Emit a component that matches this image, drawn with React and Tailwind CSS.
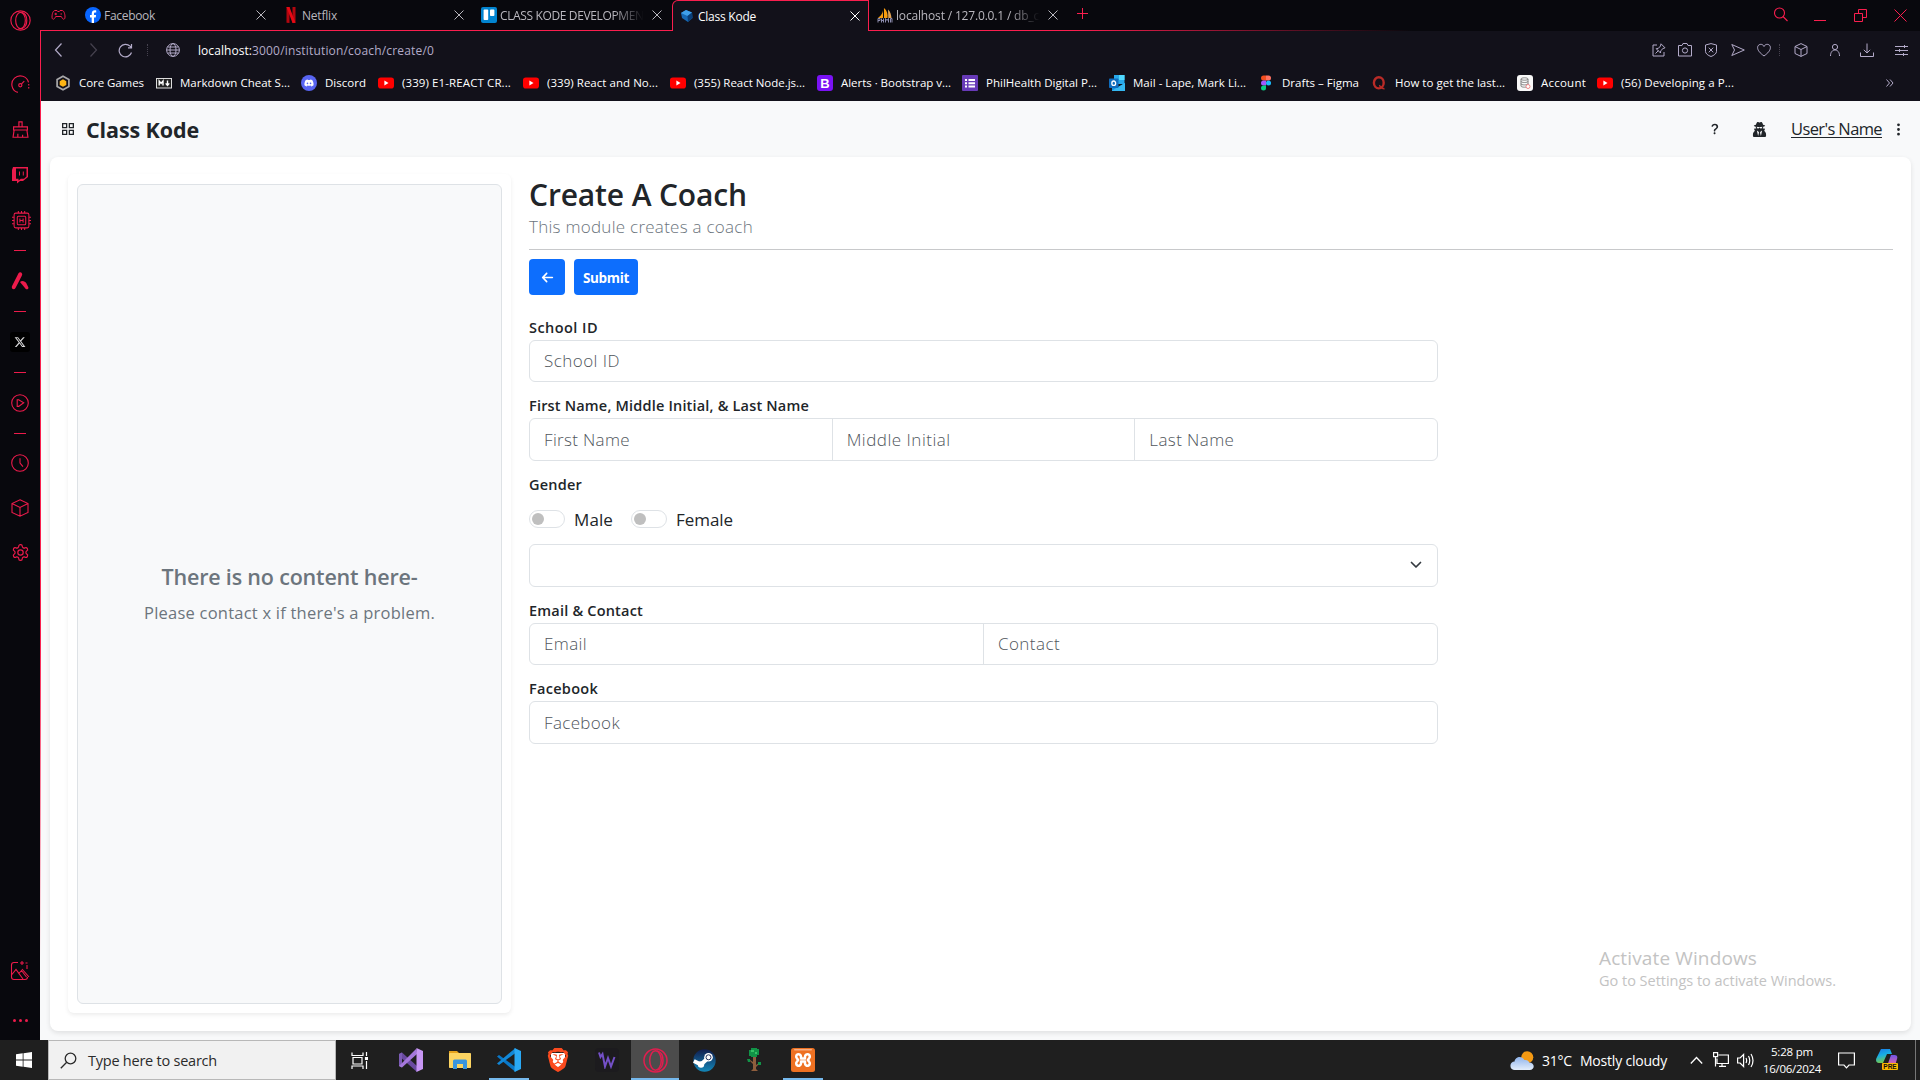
import React, { useLayoutEffect, useRef } from "react";
import { FaUserSecret } from "react-icons/fa";
import { FaArrowLeft, FaDiscord, FaXTwitter } from "react-icons/fa6";
import { BsQuestionLg, BsThreeDotsVertical } from "react-icons/bs";
import { SiBrave } from "react-icons/si";

const OS = "font-['Open_Sans',sans-serif]";

/* One line of text whose tracking is adjusted so that it spans w pixels. */
function T({ w, className = "", children }) {
  const ref = useRef(null);
  useLayoutEffect(() => {
    const el = ref.current;
    el.style.letterSpacing = "0px";
    const n = el.textContent.length;
    const natural = el.getBoundingClientRect().width;
    el.style.letterSpacing = (w - natural) / n + "px";
  }, [w, children]);
  return (
    <span ref={ref} className={`inline-block shrink-0 whitespace-pre leading-none ${className}`}>
      {children}
    </span>
  );
}

function Line({ size = 16, box = 16, sw = 1, className = "", children }) {
  return (
    <svg width={size} height={size} viewBox={`0 0 ${box} ${box}`} fill="none" stroke="currentColor" strokeWidth={sw} className={`block shrink-0 ${className}`}>
      {children}
    </svg>
  );
}

const OperaO = ({ size, sw = 1 }) => (
  <Line size={size} box={20} sw={sw}>
    <circle cx="10" cy="10" r="9.2" />
    <ellipse cx="10" cy="10" rx="4.6" ry="7.8" />
    <path d="M11 2.3c3.5.8 5 4 5 7.7s-1.500 6.900-5 7.700" />
  </Line>
);

/* ---------- favicons ---------- */
const YouTube = () => (
  <svg width="16" height="16" viewBox="0 0 16 16" className="shrink-0">
    <rect y="2.500" width="16" height="11" rx="2.800" fill="#f00" />
    <path d="M6.400 5.600 10.500 8l-4.100 2.400z" fill="#fff" />
  </svg>
);
const Facebook = () => (
  <svg width="16" height="16" viewBox="0 0 16 16" className="shrink-0">
    <circle cx="8" cy="8" r="8" fill="#0866ff" />
    <path d="M6.700 16V10.400H5V8h1.700V6.900c0-2.700 1.300-3.700 3.200-3.700.6 0 1 .1 1.300.2v2.200h-.9c-1 0-1.300.5-1.300 1.400v1h2.100l-.4 2.400H9V16z" fill="#fff" />
  </svg>
);
const Netflix = () => (
  <svg width="16" height="16" viewBox="0 0 16 16" className="shrink-0">
    <path d="M3.500 0h3v16l-3-.3zM9.500 0h3v15.700l-3 .3z" fill="#b1060f" />
    <path d="M3.500 0h3l6 15.800-3 .2z" fill="#e50914" />
  </svg>
);
const Trello = () => (
  <svg width="16" height="16" viewBox="0 0 16 16" className="shrink-0">
    <rect width="16" height="16" rx="2" fill="#0284d0" />
    <rect x="2.600" y="2.600" width="4.600" height="10.400" rx=".8" fill="#fff" />
    <rect x="9" y="2.600" width="4.400" height="6.400" rx=".8" fill="#fff" />
  </svg>
);
const KodeCube = () => (
  <svg width="16" height="16" viewBox="0 0 16 16" className="shrink-0">
    <path d="M7 2 13 4.500 13.500 10 9 14 3 10 2 5z" fill="#1769b5" />
    <path d="M7 2 13 4.500 8.500 8 2 5z" fill="#3fa0ea" />
    <path d="M8.500 8 13 4.500 13.500 10 9 14z" fill="#0a3f78" />
  </svg>
);
const PhpMyAdmin = () => (
  <svg width="16" height="16" viewBox="0 0 16 16" className="shrink-0">
    <path d="M6 .5C6.500 5 5 8 1 11h5z" fill="#f89c0e" />
    <path d="M7 1c3 2.500 4 6 3.500 10H7z" fill="#f89c0e" />
    <path d="M11 2.500c2.500 2 3 5 3.500 8.500h-3.200z" fill="#e2a354" />
    <path d="M1 15.500v-4h2v2H1m3.500 2v-4m0 2h2m0-2v4m2 0v-4l1.500 2 1.500-2v4m2 0v-4h1.500v4" stroke="#8c8cae" fill="none" />
  </svg>
);
const CoreGames = () => (
  <svg width="16" height="16" viewBox="0 0 16 16" className="shrink-0">
    <path d="M8 1.200 13.900 4.600v6.800L8 14.800 2.100 11.400V4.600z" fill="#15131c" stroke="#a9a9ab" strokeWidth="1.700" />
    <path d="M8 4.300 11.300 6.200v3.700L8 11.800 4.700 9.900V6.200z" fill="#fdb515" />
  </svg>
);
const Markdown = () => (
  <Line>
    <rect x=".5" y="3.500" width="15" height="9.500" fill="#222" stroke="#ddd" />
    <path d="M3.200 10.500V6l1.900 2.400L7 6v4.500M11.500 5.600v4M9.700 8.400l1.800 2 1.800-2" stroke="#fff" strokeWidth="1.400" />
  </Line>
);
const Discord = () => (
  <div className="flex h-4 w-4 shrink-0 items-center justify-center rounded-full bg-[#5865f2] text-white"><FaDiscord size={10} /></div>
);
const BootstrapB = () => (
  <div className="flex h-4 w-4 shrink-0 items-center justify-center rounded-[3px] bg-[#7a12f5] font-['Liberation_Sans',sans-serif] text-[13px] font-bold leading-none text-white">B</div>
);
const Forms = () => (
  <svg width="16" height="16" viewBox="0 0 16 16" className="shrink-0">
    <rect width="16" height="16" rx="1" fill="#673ab7" />
    <path d="M3 4h2v2H3zm3.500 0H13v2H6.500zM3 7.200h2v2H3zm3.500 0H13v2H6.500zM3 10.400h2v2H3zm3.500 0H13v2H6.500z" fill="#fff" />
  </svg>
);
const Outlook = () => (
  <svg width="16" height="16" viewBox="0 0 16 16" className="shrink-0">
    <rect x="5" y="0" width="10.500" height="9" fill="#28a8ea" />
    <rect x="10" y="0" width="5.500" height="5" fill="#50d9ff" />
    <path d="M3 8 9 12 16 8v8H3z" fill="#1490df" />
    <path d="M3 15.500 16 8v8H3z" fill="#35b8f1" />
    <rect x="0" y="3.500" width="9.500" height="9.500" rx=".8" fill="#0f6cbd" />
    <ellipse cx="4.750" cy="8.200" rx="1.900" ry="2.200" fill="none" stroke="#fff" strokeWidth="1.300" />
  </svg>
);
const Figma = () => (
  <svg width="16" height="16" viewBox="0 0 16 16" className="shrink-0">
    <path d="M8 .5H5.500a2.500 2.500 0 0 0 0 5H8z" fill="#f24e1e" />
    <path d="M8 .5h2.500a2.500 2.500 0 0 1 0 5H8z" fill="#ff7262" />
    <path d="M8 5.500H5.500a2.500 2.500 0 0 0 0 5H8z" fill="#a259ff" />
    <circle cx="10.500" cy="8" r="2.500" fill="#1abcfe" />
    <path d="M8 10.500H5.500A2.500 2.500 0 1 0 8 13z" fill="#0acf83" />
  </svg>
);
const Quora = () => (
  <Line>
    <ellipse cx="7.800" cy="7.800" rx="4.900" ry="5.600" stroke="#b92b27" strokeWidth="2.400" />
    <path d="M8 10.500c1.500 0 2.500 3.700 5.500 3.200" stroke="#b92b27" strokeWidth="1.700" />
  </Line>
);
const Account = () => (
  <svg width="16" height="16" viewBox="0 0 16 16" className="shrink-0">
    <rect width="16" height="16" rx="3" fill="#f8f8f8" />
    <path d="M4 4c0-1.600 7-1.600 7 0v7c0 1.600-7 1.600-7 0zm0 0c0 1.600 7 1.600 7 0M4 6.300c0 1.600 7 1.600 7 0M4 8.700c0 1.600 7 1.600 7 0" fill="none" stroke="#777" strokeWidth=".9" />
    <circle cx="11" cy="11.500" r="2" fill="#fff" stroke="#e88" />
  </svg>
);

/* ---------- left rail ---------- */
const Dash = () => <div className="h-px w-3 bg-[#ec1b4b]" />;
const railItems = [
  ["h-[40px]", <OperaO size={21} sw={1.100} />],
  ["h-[23px]", null],
  ["h-[43px]", <Line size={19} box={18} sw={1.100}><path d="M6.500 16.500A8 8 0 1 1 16.600 7M9 17.200h0" /><path d="M16.800 8.500v5" strokeDasharray="1.500 1.300" /><circle cx="8.800" cy="9.700" r="1.500" /><path d="m10 8.500 2.600-2.700" /></Line>],
  ["h-[46px]", <Line size={17} box={16} sw={1.100}><path d="M6.500 5V.8h3V5M1.500 5.500h13v3h-13zM2 8.500l-1 6.800h14l-1-6.800M5.500 15v-3M10 15v-2" /></Line>],
  ["h-[46px]", <svg width="18" height="18" viewBox="0 0 18 18"><path d="M2 1h15v10l-5 4H9l-3 2.500V15H1V4z" fill="#ec1b4b" /><path d="M5 2.500h10.500v8l-2.500 2.300H9.800L7.500 14.500v-1.700H5z" fill="#08080d" /><path d="M8 5.500h1v4H8zm3.800 0h1v4h-1z" fill="#ec1b4b" /></svg>],
  ["h-[45px]", <Line size={19} box={18} className="ml-[2px]"><rect x="2" y="2" width="14" height="14" rx="1.500" /><rect x="5" y="5" width="8" height="8" rx="1" /><path d="M7.500 7v4M10.500 7v4M7.500 9h3M6 0v2M9 0v2M12 0v2M6 16v2M9 16v2M12 16v2M0 6h2M0 9h2M0 12h2M16 6h2M16 9h2M16 12h2" /></Line>],
  ["h-[14px]", <Dash />],
  ["h-[48px]", <svg width="18" height="18" viewBox="0 0 18 18" fill="#ec1b4b"><path d="M7.500 1.300C8.300 0 10.300 0 11 1.500c.4.900.2 1.600-.3 2.500L4.500 16c-1.200 2-3.700 1.200-3.700-.8 0-.7.200-1 .5-1.600z" /><path d="M9 10c2-2 5-1 6.300 1.200l2 4c.7 1.600-1.300 2.800-2.500 1.800z" /></svg>],
  ["h-[13px]", <Dash />],
  ["h-[47px]", <div className="flex h-5 w-5 items-center justify-center rounded-[3px] bg-black text-[#d8d8d8]"><FaXTwitter size={12} /></div>],
  ["h-[14px]", <Dash />],
  ["h-[47px]", <Line size={18} box={18} sw={1.100}><circle cx="9" cy="9" r="8.300" /><path d="M6.200 5.700h1.500l5 3-5 3.700H6.200z" /></Line>],
  ["h-[14px]", <Dash />],
  ["h-[46px]", <Line size={18} box={18} sw={1.100}><circle cx="9" cy="9" r="8.300" /><path d="M9 4.200V9l3 3.600" /></Line>],
  ["h-[43px]", <Line size={18} box={18} sw={1.100}><path d="M9 .8 17 4.500v9L9 17.200 1 13.500v-9zM1 4.500 9 8.500l8-4M9 8.500v8.700" /></Line>],
  ["h-[47px]", <Line size={19} box={24} sw={1.500}><path d="M12.220 2h-.44a2 2 0 0 0-2 2v.18a2 2 0 0 1-1 1.730l-.43.25a2 2 0 0 1-2 0l-.15-.08a2 2 0 0 0-2.730.73l-.22.38a2 2 0 0 0 .73 2.730l.15.1a2 2 0 0 1 1 1.720v.51a2 2 0 0 1-1 1.740l-.15.09a2 2 0 0 0-.73 2.730l.22.38a2 2 0 0 0 2.730.73l.15-.08a2 2 0 0 1 2 0l.43.25a2 2 0 0 1 1 1.730V20a2 2 0 0 0 2 2h.44a2 2 0 0 0 2-2v-.18a2 2 0 0 1 1-1.730l.43-.25a2 2 0 0 1 2 0l.15.08a2 2 0 0 0 2.730-.73l.22-.39a2 2 0 0 0-.73-2.730l-.15-.08a2 2 0 0 1-1-1.740v-.5a2 2 0 0 1 1-1.740l.15-.09a2 2 0 0 0 .73-2.730l-.22-.38a2 2 0 0 0-2.730-.73l-.15.08a2 2 0 0 1-2 0l-.43-.25a2 2 0 0 1-1-1.730V4a2 2 0 0 0-2-2z" /><circle cx="12" cy="12" r="3.400" /></Line>],
];

function Rail() {
  return (
    <div className="flex h-[1040px] w-[40px] shrink-0 flex-col bg-[#08080d] text-[#ec1b4b]">
      {railItems.map(([h, icon], i) => (
        <div key={i} className={`flex shrink-0 items-center justify-center ${h}`}>{icon}</div>
      ))}
      <div className="mt-auto flex h-10 items-center justify-center">
        <Line size={20} box={20} sw={1.100}>
          <path d="M8 1.500H4Q1.500 1.500 1.500 4v12Q1.500 18.500 4 18.500h11q2.500 0 2.500-2.500M1.500 14 6 8.500l7 9.500M8.500 13l3-3.500 5 6.500M12 0v4M10 2h4M17 4v4M12 8l7 8M15.500 2h2" />
        </Line>
      </div>
      <div className="mb-2 mt-[17px] flex h-6 items-center justify-center gap-[3px]">
        <i className="h-[3px] w-[3px] rounded-full bg-current" /><i className="h-[3px] w-[3px] rounded-full bg-current" /><i className="h-[3px] w-[3px] rounded-full bg-current" />
      </div>
    </div>
  );
}

/* ---------- browser chrome ---------- */
const CloseX = () => <Line size={10} box={10}><path d="M.5.500l9 9M9.500.500l-9 9" /></Line>;

function Tab({ icon, title, w, active, fade }) {
  return (
    <div className={`flex shrink-0 items-center ${active ? "relative ml-px h-[31px] w-[197px] rounded-tl-[6px] border-x border-t border-[#fa1e4e] bg-[#12111a] pl-[6px] text-white" : "h-[30px] w-[198px] pl-2 text-[#b9b7be]"}`}>
      {icon}
      <div className={`ml-[3px] flex w-[145px] py-1 ${fade ? "overflow-hidden [mask-image:linear-gradient(to_right,black_78%,transparent_99%)]" : ""}`}>
        <T w={w} className="pt-px text-[12px]">{title}</T>
      </div>
      <div className="ml-[7px]"><CloseX /></div>
    </div>
  );
}

function TabBar() {
  return (
    <div className="relative flex h-[31px] bg-[#08080d]">
      <div className="absolute bottom-0 left-0 right-0 h-px bg-[linear-gradient(to_right,#fa1e4e_55%,#fa1e4e00_73%)]" />
      <div className="flex w-[37px] items-center justify-center text-[#ec1b4b]">
        <Line size={15} box={15}><path d="M4 2.500h2l.7 1h1.600l.7-1h2c2 0 3 3.500 3 6.500 0 2.800-2 2.800-3 .8l-.7-1.300H4.700L4 9.800c-1 2-3 2-3-.8 0-3 1-6.500 3-6.500zM3.500 6H6M4.750 4.800v2.400M9.500 6H11" /></Line>
      </div>
      <Tab icon={<Facebook />} title="Facebook" w={51} />
      <Tab icon={<Netflix />} title="Netflix" w={35} />
      <Tab icon={<Trello />} title="CLASS KODE DEVELOPMENT" w={150} fade />
      <Tab icon={<KodeCube />} title="Class Kode" w={58} active />
      <Tab icon={<PhpMyAdmin />} title="localhost / 127.0.0.1 / db_cl" w={146} fade />
      <div className="flex w-[30px] items-center justify-center pb-1 text-[#fa1e4e]"><Line size={11} box={11}><path d="M5.500 0v11M0 5.500h11" /></Line></div>
      <div className="ml-auto flex items-center text-[#fa1e4e]">
        <div className="flex w-10 justify-center pb-0.5"><Line size={15} box={15} sw={1.100}><circle cx="6.500" cy="6" r="5" /><path d="m10 9.500 4.500 4.500" /></Line></div>
        <div className="flex w-10 justify-center pt-[10px]"><div className="h-px w-3 bg-current" /></div>
        <div className="flex w-10 justify-center"><Line size={13} box={13}><path d="M.5 4.500h8v8h-8zM4.500 4V.5h8v8H9" /></Line></div>
        <div className="flex w-10 justify-center"><Line size={13} box={13}><path d="m.5.500 12 12m0-12-12 12" /></Line></div>
      </div>
    </div>
  );
}

const slot = "flex shrink-0 justify-center";
function AddressBar() {
  return (
    <div className="flex h-[38px] items-center bg-[#12111a] text-[#b3abc9]">
      <div className={`${slot} ml-[1px] w-[34px]`}><Line size={14} box={14} sw={1.200}><path d="M9.500.500 3.500 7l6 6.500" /></Line></div>
      <div className={`${slot} w-[33px] text-[#46424f]`}><Line size={14} box={14} sw={1.200}><path d="m4.500.500 6 6.500-6 6.500" /></Line></div>
      <div className={`${slot} w-[33px]`}><Line size={15} box={15} sw={1.200}><path d="M13.500 9.500A6.300 6.300 0 1 1 12 3.200l1.500 1.500M13.500 1v3.900H10" /></Line></div>
      <div className="ml-[5px] h-3 border-l border-dotted border-[#46424f]" />
      <div className={`${slot} ml-[9px] w-[32px]`}>
        <Line size={14} box={14}><circle cx="7" cy="7" r="6.400" /><ellipse cx="7" cy="7" rx="3" ry="6.400" /><path d="M.7 7h12.600M1.500 4h11M1.500 10h11" /></Line>
      </div>
      <div className="ml-[9px] flex pt-px text-[12px]"><T w={54} className="text-white">localhost:</T><T w={182}>3000/institution/coach/create/0</T></div>
      <div className="ml-auto flex items-center">
        <div className={`${slot} w-[26px]`}><Line size={14} box={14}><path d="M5 2H1v11h11V9M3.500 10.500 6.500 7.500M9 .8l4 4-2 .7-2.300 2.300-.2 2.200-4.300-4.300 2.200-.4L8.500 3z" /></Line></div>
        <div className={`${slot} w-[26px]`}><Line size={14} box={14}><path d="M.5 2.500h3.500l1-2h4l1 2h3.500v10.500H.5z" /><circle cx="7" cy="7.500" r="2.600" /></Line></div>
        <div className={`${slot} w-[26px]`}><Line size={14} box={14}><path d="M7 .6 12.500 2v6.500c0 2-2.500 4-5.500 5-3-1-5.500-3-5.500-5V2zM4.800 4.700l4.400 4.600m0-4.600L4.800 9.300" /></Line></div>
        <div className={`${slot} w-[27px]`}><Line size={14} box={14}><path d="M.8 1.500 13.300 7 .8 12.500 3.500 7z" /></Line></div>
        <div className={`${slot} w-[25px]`}><Line size={14} box={14}><path d="M7 13C3 10 .6 7.500.6 4.500.600 1 5.500 0 7 3.500 8.500 0 13.400 1 13.400 4.500 13.400 7.500 11 10 7 13z" /></Line></div>
        <div className="ml-[3px] h-3 border-l border-dotted border-[#46424f]" />
        <div className={`${slot} w-[42px]`}><Line size={14} box={14}><path d="M7 .6 13 3.500v7L7 13.400 1 10.500v-7zM1 3.500l6 3 6-3M7 6.500v7" /></Line></div>
        <div className={`${slot} w-[26px]`}><Line size={14} box={14}><circle cx="7" cy="4" r="2.600" /><path d="M2.500 13c0-4 2-6 4.500-6s4.500 2 4.500 6" /></Line></div>
        <div className={`${slot} w-[38px]`}><Line size={14} box={14}><path d="M.5 9.500v4h13v-4M7 .5V10M3.800 6.800 7 10l3.200-3.200" /></Line></div>
        <div className={`${slot} mr-[4px] w-[30px]`}><Line size={13} box={13}><path d="M0 2.500h13M0 6.500h13M0 10.500h13M9.500 1v3M4.500 5v3M8.500 9v3" /></Line></div>
      </div>
    </div>
  );
}

const bookmarks = [
  ["w-[101px]", <CoreGames />, "Core Games", 65],
  ["w-[145px]", <Markdown />, "Markdown Cheat S...", 110],
  ["w-[77px]", <Discord />, "Discord", 41],
  ["w-[145px]", <YouTube />, "(339) E1-REACT CR...", 109],
  ["w-[147px]", <YouTube />, "(339) React and No...", 111],
  ["w-[147px]", <YouTube />, "(355) React Node.js...", 111],
  ["w-[145px]", <BootstrapB />, "Alerts · Bootstrap v...", 110],
  ["w-[147px]", <Forms />, "PhilHealth Digital P...", 111],
  ["w-[149px]", <Outlook />, "Mail - Lape, Mark Li...", 113],
  ["w-[113px]", <Figma />, "Drafts – Figma", 77],
  ["w-[146px]", <Quora />, "How to get the last...", 110],
  ["w-[80px]", <Account />, "Account", 45],
  ["w-[140px]", <YouTube />, "(56) Developing a P...", 113],
];

function Bookmarks() {
  return (
    <div className="flex h-[32px] items-start bg-[#12111a] pl-[14px] pt-[6px]">
      {bookmarks.map(([w, icon, label, tw], i) => (
        <div key={i} className={`flex h-4 shrink-0 items-center gap-2 ${w}`}>
          {icon}
          <T w={tw} className="text-[11.5px] text-white">{label}</T>
        </div>
      ))}
      <div className="ml-auto mr-[26px] flex h-4 items-center text-[#b3abc9]"><Line size={8} box={8}><path d="m.5.500 3 3.500-3 3.500m3.500-7L7 4 4 7.500" /></Line></div>
    </div>
  );
}

/* ---------- web page ---------- */
const Label = ({ w, className = "", children }) => (
  <div className={`flex items-center ${className}`}><T w={w} className="text-[14.500px] font-semibold text-[#212529]">{children}</T></div>
);

function InputGroup({ fields, className = "h-[42px]" }) {
  return (
    <div className={`flex w-[909px] rounded-[6px] border border-[#dee2e6] bg-white ${className}`}>
      {fields.map(([text, w], i) => (
        <div key={text} className={`flex flex-1 items-center pb-px pl-[14px] ${i ? "border-l border-[#dee2e6]" : ""}`}>
          <T w={w} className="text-[17px] font-[350] text-[#50565c]">{text}</T>
        </div>
      ))}
    </div>
  );
}

const Switch = () => (
  <div className="flex h-[18px] w-9 items-center rounded-full border border-[#dee2e6] bg-white pl-[2px]"><div className="h-3 w-3 rounded-full bg-[#bfbfbf]" /></div>
);

function Page() {
  return (
    <div className="h-[939px] bg-[#f8f9fa] text-[#212529]">
      <header className="flex h-14 items-center">
        <Line size={12} box={12} sw={1.300} className="ml-[21px]"><path d="M.65.650h4v4h-4zm6.700 0h4v4h-4zm-6.700 6.700h4v4h-4zm6.700 0h4v4h-4z" /></Line>
        <T w={113} className="ml-[12px] pt-px text-[21.500px] font-bold">Class Kode</T>
        <div className="ml-auto flex items-center">
          <BsQuestionLg size={14} />
          <FaUserSecret size={15} className="ml-[30px]" />
          <T w={91} className="ml-[24px] pt-px text-[16.500px] underline underline-offset-2">User's Name</T>
          <BsThreeDotsVertical size={15} className="ml-[9px] mr-[14px]" />
        </div>
      </header>
      <main className="ml-[9px] flex h-[874px] w-[1861px] rounded-lg bg-white shadow-[0_2px_5px_rgba(0,0,0,0.1)]">
        <aside className="ml-[18px] mt-[17px] h-[839px] w-[443px] rounded-md bg-white px-[9px] py-[10px] shadow-[0_2px_4px_rgba(0,0,0,0.075)]">
          <div className="flex h-[820px] w-[425px] flex-col items-center rounded-md border border-[#dee2e6] bg-[#f8f9fa] pt-[381px] text-[#6c757d]">
            <T w={256} className="text-[21.500px] font-semibold">There is no content here-</T>
            <T w={291} className="mt-[17px] text-[16.500px]">Please contact x if there's a problem.</T>
          </div>
        </aside>
        <section className="ml-[18px] flex w-[1364px] flex-col">
          <T w={218} className="mt-[23px] self-start text-[30px] font-semibold">Create A Coach</T>
          <T w={224} className="mt-[8px] self-start text-[17px] font-[350] text-[#6c757d]">This module creates a coach</T>
          <div className="mt-[14px] h-px bg-[#c8c9cb]" />
          <div className="mt-[9px] flex gap-[9px]">
            <div className="flex h-9 w-9 items-center justify-center rounded-[4px] bg-[#0d6efd] text-white"><FaArrowLeft size={13} /></div>
            <div className="flex h-9 w-16 items-center justify-center rounded-[4px] bg-[#0d6efd] pt-[3px] text-white"><T w={46} className="text-[13.500px] font-bold">Submit</T></div>
          </div>
          <Label w={69} className="h-[45px] pt-[21px]">School ID</Label>
          <InputGroup fields={[["School ID", 76]]} />
          <Label w={280} className="h-[36px] pt-[13px]">First Name, Middle Initial, &amp; Last Name</Label>
          <InputGroup className="h-[43px]" fields={[["First Name", 86], ["Middle Initial", 104], ["Last Name", 85]]} />
          <Label w={53} className="h-[38px] pt-[11px]">Gender</Label>
          <div className="flex h-[40px] items-center">
            <Switch /><T w={39} className="ml-[9px] text-[17px]">Male</T>
            <div className="ml-[18px]"><Switch /></div><T w={57} className="ml-[9px] text-[17px]">Female</T>
          </div>
          <div className="mt-[5px] flex h-[43px] w-[909px] items-center justify-end rounded-[6px] border border-[#dee2e6] pb-px pr-[15px]">
            <Line size={12} box={12} sw={1.700}><path d="m1.500 3.500 4.500 4.500 4.500-4.500" stroke="#343a40" strokeLinecap="round" strokeLinejoin="round" /></Line>
          </div>
          <Label w={114} className="h-[36px] pt-[12px]">Email &amp; Contact</Label>
          <InputGroup fields={[["Email", 43], ["Contact", 62]]} />
          <Label w={69} className="h-[36px] pt-[13px]">Facebook</Label>
          <InputGroup className="h-[43px]" fields={[["Facebook", 76]]} />
        </section>
      </main>
    </div>
  );
}

/* ---------- Windows taskbar ---------- */
const VisualStudio = () => (
  <svg width="24" height="24" viewBox="0 0 24 24">
    <path d="M0 6 3 4.500 18 18V24L0 8z" fill="#6a4aa0" /><path d="M0 6v12l3 1.500V4.500z" fill="#7c5cb5" />
    <path d="M3 19.500 0 18 17.500.500 18 6z" fill="#a577dc" /><path d="M17.500 0 24 3v18l-6.500 3z" fill="#c897f5" />
  </svg>
);
const Explorer = () => (
  <svg width="22" height="20" viewBox="0 0 22 20">
    <path d="M0 1h8l2 2v4H0z" fill="#e5a21c" /><rect y="3" width="22" height="15" rx=".8" fill="#fcd462" />
    <path d="M4 19V11q0-1.500 1.500-1.500h11Q18 9.500 18 11v8h-4v-5H8v5z" fill="#3a95de" />
  </svg>
);
const VSCode = () => (
  <svg width="24" height="24" viewBox="0 0 24 24">
    <path d="M0 8.500 2 7l16.500 12V24z" fill="#0a78c8" /><path d="M0 15.500 2 17l16.500-12V0z" fill="#1288d8" />
    <path d="M17.500 0 24 3v18l-6.500 3z" fill="#2aa9f5" />
  </svg>
);
const Brave = () => (
  <div className="relative flex text-[#fb4a1e]">
    <div className="absolute left-[5px] top-[5px] h-[14px] w-[14px] rounded-b-full bg-white" />
    <SiBrave size={24} className="relative" />
  </div>
);
const Wave = () => (
  <div className="flex h-6 w-6 items-center justify-center rounded-[4px] bg-[#1c1b1e]"><Line size={18} box={18} sw={2}><path d="M1 1.500 2.500 6 4.500 3l2.500 12.500L10 7l3 8.500L16.500 6" stroke="#7450c8" /></Line></div>
);
const Steam = () => (
  <svg width="23" height="23" viewBox="0 0 23 23">
    <defs><linearGradient id="steam" x2="0" y2="1"><stop stopColor="#111d4e" /><stop offset="1" stopColor="#1387b8" /></linearGradient></defs>
    <circle cx="11.500" cy="11.500" r="11.200" fill="url(#steam)" />
    <path d="M.8 12 8 15.500 15 9" fill="none" stroke="#fff" strokeWidth="4" />
    <circle cx="15.500" cy="8.300" r="4.300" fill="#fff" /><circle cx="15.500" cy="8.300" r="2.500" fill="#fff" stroke="#24315c" strokeWidth="1" /><circle cx="8" cy="15.500" r="3.200" fill="#fff" />
  </svg>
);
const Terraria = () => (
  <svg width="14" height="24" viewBox="0 0 14 24">
    <path d="M6 9h3v12l2 2H4l2-2zM9 17l3-2v1l-3 3M6 14l-3-2v1l3 3" fill="#8f5e3d" />
    <path d="M4 0h6v1h2v6h-2v2H4V8H2V2h2zM0 11h3v3H1zM11 14h3v3h-3z" fill="#119347" /><path d="M4 2h3v2H4zM8 4h2v2H8z" fill="#35c365" />
  </svg>
);
const Xampp = () => (
  <svg width="24" height="24" viewBox="0 0 24 24">
    <rect width="24" height="24" rx="2.500" fill="#ee7122" /><rect x="3" y="1" width="18" height="1.500" rx=".7" fill="#f7ae82" />
    <path d="M12 10.500h2V8.500a2.400 2.400 0 1 1 4 1.900L16.800 12l1.200 1.600a2.400 2.400 0 1 1-4 1.900v-2h-4v2a2.400 2.400 0 1 1-4-1.900L7.200 12 6 10.400a2.400 2.400 0 1 1 4-1.900v2z" fill="none" stroke="#fff" strokeWidth="2.500" strokeLinejoin="round" />
  </svg>
);
const TaskView = () => (
  <Line size={17} box={17} sw={1.200} className="mr-[3px]"><path d="M2 5.500h9v6.500H2zM1 .5v3h11v-3M1 17v-3h11v3M15.500 0v4M15.500 9v8" /><path d="M14.500 5.500h2v2h-2z" fill="currentColor" /></Line>
);
const Weather = () => (
  <svg width="25" height="21" viewBox="0 0 26 22">
    <defs><linearGradient id="cloud" x2="0" y2="1"><stop stopColor="#8fb4ec" /><stop offset="1" stopColor="#e4eefc" /></linearGradient></defs>
    <circle cx="18" cy="7.500" r="6.300" fill="#f59a13" />
    <path d="M5 21a4.500 4.500 0 0 1-.3-9C5 7 12.500 5 15 10.500c4-.5 5 2 4.800 2.500C26.500 13 26 21 20.500 21z" fill="url(#cloud)" />
  </svg>
);
const Copilot = () => (
  <svg width="22" height="22" viewBox="0 0 22 22">
    <defs><linearGradient id="cpa" x2=".3" y2="1"><stop stopColor="#1a78e8" /><stop offset=".5" stopColor="#18aee5" /><stop offset="1" stopColor="#76c94a" /></linearGradient><linearGradient id="cpb" x2="0" y2="1"><stop stopColor="#6d55e8" /><stop offset="1" stopColor="#f4679c" /></linearGradient></defs>
    <path d="M5 0h9l2 5h-5L7 14H3c-3 0-3.500-3-2.500-5z" fill="url(#cpa)" /><path d="M15 6h3.500C22 6 21.500 9 21 10l-1.500 5c-.4 1-1 2-2.500 2H9c2-1 3-2 3.500-4z" fill="url(#cpb)" />
    <rect x="6" y="14" width="16" height="7" rx="1" fill="#fdb900" />
    <text x="14" y="20" textAnchor="middle" fontSize="6.500" fontWeight="bold" fontFamily="Liberation Sans" fill="#111">PRE</text>
  </svg>
);

/* [icon, state, slot width]: state 1 = running, 2 = focused */
const apps = [
  [<TaskView />, 0, "w-[50px]"], [<VisualStudio />, 0, "w-[49px]"], [<Explorer />, 0, "w-[49px]"], [<VSCode />, 1, "w-[49px]"],
  [<Brave />, 0, "w-[49px]"], [<Wave />, 0, "w-[49px]"],
  [<div className="text-[#e01e4f]"><OperaO size={25} sw={1.200} /></div>, 2, "w-12"], [<Steam />, 0, "w-[50px]"], [<Terraria />, 0, "w-[49px]"], [<Xampp />, 1, "w-[49px]"],
];

function Taskbar() {
  return (
    <div className="flex h-10 items-center bg-[#1f1f1f] text-white">
      <div className="flex w-12 justify-center">
        <svg width="16" height="16" viewBox="0 0 16 16" fill="#fff"><path d="M0 2.200 6.700 1.300v6.300H0zM7.500 1.200 16 0v7.600H7.500zM0 8.400h6.700v6.300L0 13.800zM7.500 8.400H16V16l-8.500-1.200z" /></svg>
      </div>
      <div className="flex h-10 w-72 items-center border border-[#b8b8b8] bg-[#f1f1f1] pl-[11px] text-[#2b2b2b]">
        <Line size={17} box={17} sw={1.300}><circle cx="10.500" cy="6.500" r="5.300" /><path d="M6.700 10.300.8 16.300" /></Line>
        <T w={129} className="ml-[11px] pt-[2px] text-[14.500px]">Type here to search</T>
      </div>
      <div className="flex">
        {apps.map(([icon, state, w], i) => (
          <div key={i} className={`relative flex h-10 shrink-0 items-center justify-center ${w} ${state === 2 ? "bg-[#4c4c4c]" : ""}`}>
            {icon}
            {state > 0 && <div className={`absolute bottom-0 h-0.5 bg-[#76b9ed] ${state === 2 ? "w-full" : "w-10"}`} />}
          </div>
        ))}
      </div>
      <div className="ml-auto flex h-10 items-center">
        <Weather />
        <T w={30} className="ml-[7px] pt-px text-[14px]">31°C</T>
        <T w={87} className="ml-[8px] pt-px text-[14px]">Mostly cloudy</T>
        <div className="ml-[23px]"><Line size={13} box={13} sw={1.300}><path d="m.8 9.500 5.700-6 5.700 6" /></Line></div>
        <div className="ml-[10px]"><Line size={16} box={16} sw={1.200}><path d="M5.500 3H15.400v8.500H4V6.500M9 11.500V14M6 14.400h7M.6.600h4v4h-4zM2.500 5v9.500" /></Line></div>
        <div className="ml-[8px]"><Line size={17} box={17} sw={1.200}><path d="M.6 6v5h2.500l3.500 3.500v-12L3.100 6zM9 6q1.300 2.500 0 5M11.500 4q2.500 4.500 0 9M14 2q4 6.500 0 13" /></Line></div>
        <div className="ml-[8px] flex w-[60px] flex-col items-center gap-[6px]"><T w={42} className="text-[11.500px]">5:28 pm</T><T w={58} className="text-[11.500px]">16/06/2024</T></div>
        <div className="ml-[16px]"><Line size={17} box={17} sw={1.200}><path d="M.6 1h15.800v12H11l-2.500 2.800L6 13H.6z" /></Line></div>
        <div className="ml-[21px]"><Copilot /></div>
        <div className="ml-[17px] mr-1 h-10 w-px bg-[#777]" />
      </div>
    </div>
  );
}

export default function App() {
  return (
    <div className={`relative h-[1080px] w-[1920px] overflow-hidden bg-[#f8f9fa] ${OS}`}>
      <div className="flex h-[1040px]">
        <Rail />
        <div className="flex w-[1880px] flex-col">
          <TabBar />
          <div className="flex">
            <div className="h-[1009px] w-px bg-[linear-gradient(to_bottom,#fa1e4e_60%,#f8f9fa_92%)]" />
            <div className="w-[1879px]">
              <AddressBar />
              <Bookmarks />
              <Page />
            </div>
          </div>
        </div>
      </div>
      <Taskbar />
      <div className="absolute left-[1599px] top-[949px] flex flex-col items-start text-[#c3c3c3]">
        <T w={158} className="text-[19px]">Activate Windows</T>
        <T w={237} className="mt-[6px] text-[14.500px]">Go to Settings to activate Windows.</T>
      </div>
    </div>
  );
}
